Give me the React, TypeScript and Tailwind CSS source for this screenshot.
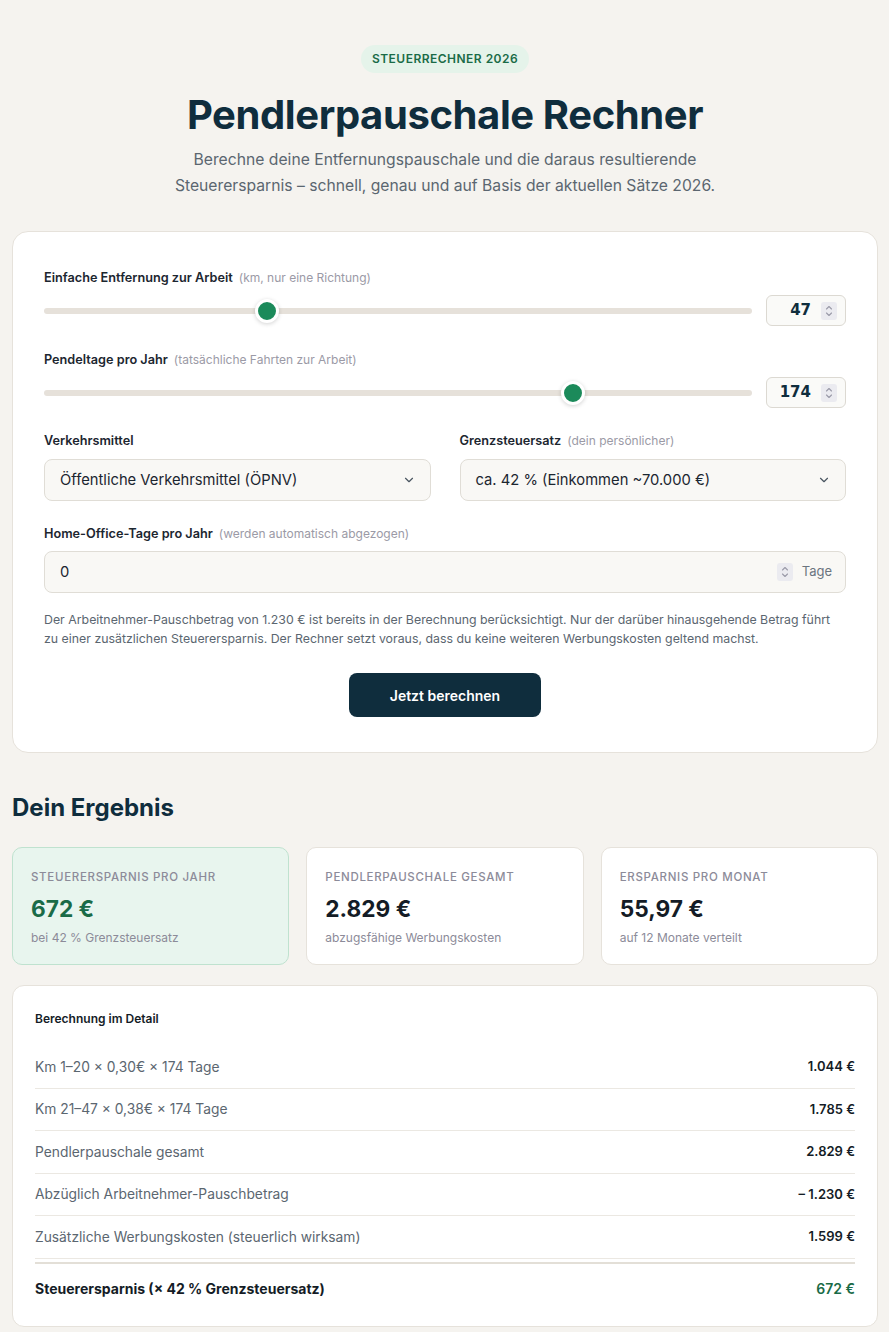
import React from 'react';

const font = { fontFamily: 'Inter, "Noto Sans", sans-serif' };

const Spinner: React.FC<{ className?: string }> = ({ className }) => (
    <span className={`flex h-[18px] w-[16px] flex-col items-center justify-center rounded-[3px] bg-[#ebebf0] ${className ?? ''}`}>
        <svg width="8" height="14" viewBox="0 0 8 14" fill="none" stroke="#9a9aa8" strokeWidth="1.1" strokeLinecap="round" strokeLinejoin="round">
            <path d="M1.5 5 L4 2.5 L6.5 5" />
            <path d="M1.5 9 L4 11.5 L6.5 9" />
        </svg>
    </span>
);

const Chevron = () => (
    <svg width="14" height="14" viewBox="0 0 24 24" fill="none" stroke="#4a5560" strokeWidth="2" strokeLinecap="round" strokeLinejoin="round">
        <path d="M6 9l6 6 6-6" />
    </svg>
);

interface SliderProps {
    value: number;
    min: number;
    max: number;
}

const SliderRow: React.FC<SliderProps> = ({ value, min, max }) => {
    const pct = (value - min) / (max - min);
    return (
        <div className="flex items-center gap-[14px]">
            <div className="relative flex h-[31px] flex-1 items-center">
                <div className="h-[6px] w-full rounded-full bg-[#e6e1da]" />
                <div
                    className="absolute top-1/2 h-[24px] w-[24px] -translate-y-1/2 rounded-full border-[3px] border-white bg-[#1b8a5a] shadow-[0_1px_4px_rgba(0,0,0,0.18)]"
                    style={{ left: `calc(${pct * 100}% - ${pct * 24}px)` }}
                />
            </div>
            <div className="flex h-[31px] w-[80px] items-center justify-end gap-[10px] rounded-[6px] border border-[#dcd9d2] bg-[#fafaf8] pr-[8px]">
                <span className="text-[15px] font-bold text-[#0f2d3d]" style={{ fontFamily: '"DejaVu Sans", sans-serif' }}>{value}</span>
                <Spinner />
            </div>
        </div>
    );
};

const Label: React.FC<{ title: string; hint?: string }> = ({ title, hint }) => (
    <div className="flex items-baseline gap-[6px]">
        <span className="text-[12.7px] font-semibold text-[#1c2630]">{title}</span>
        {hint && <span className="text-[12px] text-[#9b9aa6]">{hint}</span>}
    </div>
);

const ResultCard: React.FC<{ label: string; value: string; sub: string; highlight?: boolean }> = ({ label, value, sub, highlight }) => (
    <div className={`flex h-[118px] flex-col rounded-[10px] border px-[18px] pt-[21px] ${highlight ? 'border-[#bfe2cf] bg-[#e8f5ee]' : 'border-[#e6e2db] bg-white'}`}>
        <span className="text-[11.5px] font-medium uppercase tracking-[0.06em] text-[#8c8b99]">{label}</span>
        <span className={`mt-[8px] text-[22.7px] font-bold leading-[30px] ${highlight ? 'text-[#1a6b47]' : 'text-[#141c26]'}`}>{value}</span>
        <span className="mt-[5px] text-[12px] text-[#8c8b99]">{sub}</span>
    </div>
);

const rows = [
    { label: 'Km 1–20 × 0,30€ × 174 Tage', value: '1.044 €' },
    { label: 'Km 21–47 × 0,38€ × 174 Tage', value: '1.785 €' },
    { label: 'Pendlerpauschale gesamt', value: '2.829 €' },
    { label: 'Abzüglich Arbeitnehmer-Pauschbetrag', value: '– 1.230 €' },
    { label: 'Zusätzliche Werbungskosten (steuerlich wirksam)', value: '1.599 €' },
];

export default function App() {
    return (
        <div className="min-h-screen bg-[#f5f3ef] pb-[10px] pl-[12px] pr-[11px] pt-[45px]" style={font}>
            <div className="flex flex-col items-center text-center">
                <span className="rounded-full bg-[#e5f3ea] px-[11px] py-[5px] text-[12px] font-semibold tracking-[0.04em] text-[#1a6b47]">
                    STEUERRECHNER 2026
                </span>
                <h1 className="mt-[18px] text-[40px] font-bold leading-[48px] tracking-[-0.01em] text-[#0f2d3d]">
                    Pendlerpauschale Rechner
                </h1>
                <p className="mt-[8px] max-w-[560px] text-[15.7px] leading-[26px] text-[#5b6670]">
                    Berechne deine Entfernungspauschale und die daraus resultierende Steuerersparnis – schnell, genau und auf Basis der aktuellen Sätze 2026.
                </p>
            </div>

            <div className="mt-[32px] rounded-[16px] border border-[#e6e2db] bg-white px-[31px] pb-[35px] pt-[36px]">
                <Label title="Einfache Entfernung zur Arbeit" hint="(km, nur eine Richtung)" />
                <div className="mt-[8px]">
                    <SliderRow value={47} min={1} max={150} />
                </div>

                <div className="mt-[24px]">
                    <Label title="Pendeltage pro Jahr" hint="(tatsächliche Fahrten zur Arbeit)" />
                </div>
                <div className="mt-[8px]">
                    <SliderRow value={174} min={1} max={230} />
                </div>

                <div className="mt-[23px] grid grid-cols-2 gap-[29px]">
                    <div>
                        <Label title="Verkehrsmittel" />
                        <div className="mt-[9px] flex h-[42px] items-center justify-between rounded-[8px] border border-[#e0ddd6] bg-[#f9f8f5] pl-[15px] pr-[14px] text-[14.75px] text-[#1c2630]">
                            <span>Öffentliche Verkehrsmittel (ÖPNV)</span>
                            <Chevron />
                        </div>
                    </div>
                    <div>
                        <Label title="Grenzsteuersatz" hint="(dein persönlicher)" />
                        <div className="mt-[9px] flex h-[42px] items-center justify-between rounded-[8px] border border-[#e0ddd6] bg-[#f9f8f5] pl-[15px] pr-[14px] text-[14.75px] text-[#1c2630]">
                            <span>ca. 42 % (Einkommen ~70.000 €)</span>
                            <Chevron />
                        </div>
                    </div>
                </div>

                <div className="mt-[23px]">
                    <Label title="Home-Office-Tage pro Jahr" hint="(werden automatisch abgezogen)" />
                </div>
                <div className="mt-[8px] flex h-[42px] items-center rounded-[8px] border border-[#e0ddd6] bg-[#f9f8f5] pl-[15px] pr-[13px] text-[14.75px] text-[#1c2630]">
                    <span className="flex-1">0</span>
                    <Spinner />
                    <span className="ml-[9px] text-[13px] text-[#6b7580]">Tage</span>
                </div>

                <p className="mt-[17px] text-[12.35px] leading-[19px] text-[#5b6670]">
                    Der Arbeitnehmer-Pauschbetrag von 1.230 € ist bereits in der Berechnung berücksichtigt. Nur der darüber hinausgehende Betrag führt zu einer zusätzlichen Steuerersparnis. Der Rechner setzt voraus, dass du keine weiteren Werbungskosten geltend machst.
                </p>

                <div className="mt-[25px] flex justify-center">
                    <button className="h-[44px] w-[192px] rounded-[8px] bg-[#0f2d3d] text-[14px] font-semibold text-white">
                        Jetzt berechnen
                    </button>
                </div>
            </div>

            <h2 className="mt-[40px] text-[24px] font-bold leading-[30px] text-[#0f2d3d]">Dein Ergebnis</h2>

            <div className="mt-[24px] grid grid-cols-3 gap-[17px]">
                <ResultCard label="Steuerersparnis pro Jahr" value="672 €" sub="bei 42 % Grenzsteuersatz" highlight />
                <ResultCard label="Pendlerpauschale gesamt" value="2.829 €" sub="abzugsfähige Werbungskosten" />
                <ResultCard label="Ersparnis pro Monat" value="55,97 €" sub="auf 12 Monate verteilt" />
            </div>

            <div className="mt-[20px] rounded-[12px] border border-[#e6e2db] bg-white px-[22px] pb-[12px] pt-[24px]">
                <h3 className="text-[12px] font-semibold text-[#141c26]">Berechnung im Detail</h3>
                <div className="mt-[18px]">
                    {rows.map(r => (
                        <div key={r.label} className="flex h-[42.5px] items-center justify-between border-b border-[#ebe8e2]">
                            <span className="text-[13.8px] text-[#5b6670]">{r.label}</span>
                            <span className="text-[13px] font-semibold text-[#141c26]">{r.value}</span>
                        </div>
                    ))}
                    <div className="mt-[3px] flex h-[52px] items-center justify-between border-t-2 border-[#e3dfd7]">
                        <span className="text-[14px] font-bold text-[#141c26]">Steuerersparnis (× 42 % Grenzsteuersatz)</span>
                        <span className="text-[14px] font-semibold text-[#1a6b47]">672 €</span>
                    </div>
                </div>
            </div>
        </div>
    );
}
